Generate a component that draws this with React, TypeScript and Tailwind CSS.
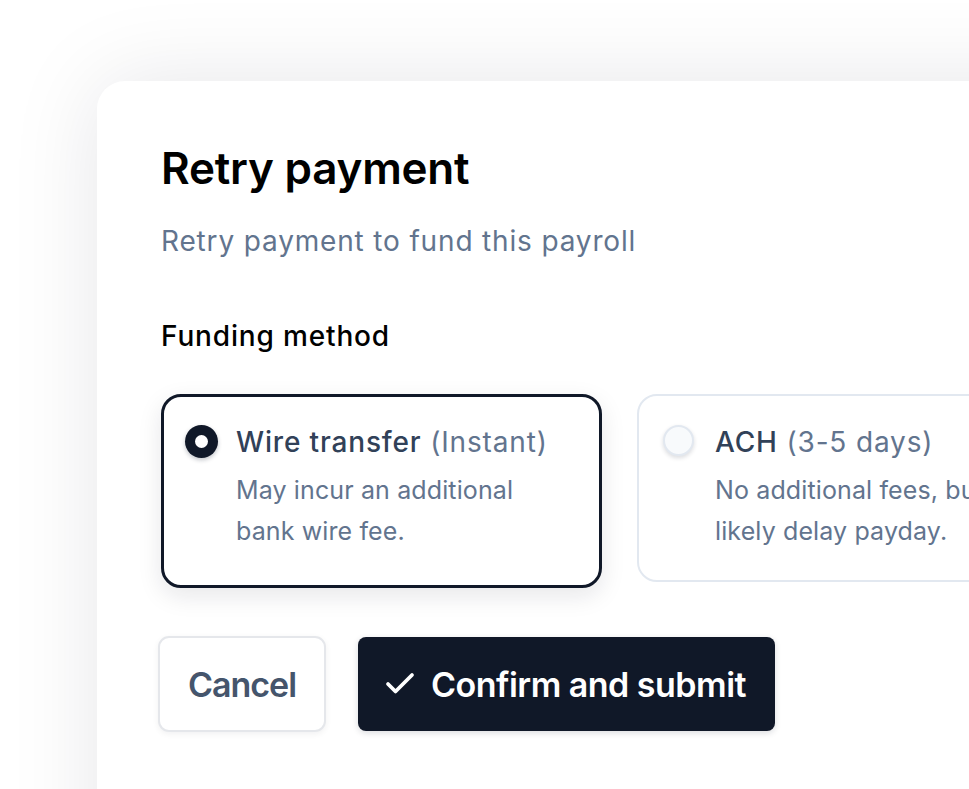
import { Check } from "lucide-react";

const options = [
    {
        id: "wire",
        title: "Wire transfer",
        hint: "(Instant)",
        desc: "May incur an additional bank wire fee.",
        selected: true,
    },
    {
        id: "ach",
        title: "ACH",
        hint: "(3-5 days)",
        desc: "No additional fees, but will likely delay payday.",
        selected: false,
    },
];

const App = () => {
    return (
        <main className="w-full h-screen overflow-hidden bg-white pt-[81px] pl-[97px] font-['Inter',sans-serif]">
            <div className="w-[1100px] h-[900px] bg-white rounded-tl-[28px] shadow-[0_0_90px_rgba(15,23,42,0.10)] pt-[61px] pl-[64px]">
                <h1 className="text-[44px] leading-[52px] font-semibold text-black tracking-[-0.005em]">Retry payment</h1>
                <p className="mt-[29px] text-[28px] leading-[36px] text-slate-500 tracking-[0.03em]">Retry payment to fund this payroll</p>

                <h2 className="mt-[59px] text-[28px] leading-[36px] font-medium text-black tracking-[0.03em]">Funding method</h2>

                <div className="flex items-start gap-[35px] mt-[40px]">
                    {options.map((opt) => (
                        <div
                            key={opt.id}
                            className={
                                opt.selected
                                    ? "w-[441px] h-[194px] shrink-0 rounded-[20px] border-[3px] border-gray-900 bg-white shadow-[0_8px_24px_rgba(15,23,42,0.10)] pt-[27px] pl-[21px] pr-[30px] flex gap-[18px]"
                                    : "w-[441px] h-[188px] shrink-0 rounded-[20px] border-2 border-slate-200 bg-white pt-[28px] pl-[24px] pr-[20px] flex gap-[21px]"
                            }
                        >
                            {opt.selected ? (
                                <span className="mt-[1px] w-[33px] h-[33px] shrink-0 rounded-full bg-gray-900 flex items-center justify-center shadow-[0_2px_4px_rgba(15,23,42,0.25)]">
                                    <span className="w-[13px] h-[13px] rounded-full bg-white" />
                                </span>
                            ) : (
                                <span className="mt-[1px] w-[31px] h-[31px] shrink-0 rounded-full bg-slate-50 border-2 border-slate-200 shadow-[0_2px_4px_rgba(15,23,42,0.15)]" />
                            )}
                            <div>
                                <p className="text-[28px] leading-[36px] text-slate-700 tracking-[0.03em] whitespace-nowrap">
                                    <span className="font-medium">{opt.title}</span> <span className="text-slate-500">{opt.hint}</span>
                                </p>
                                <p className="mt-[10px] text-[25px] leading-[41px] text-slate-500 tracking-[0.005em]">{opt.desc}</p>
                            </div>
                        </div>
                    ))}
                </div>

                <div className="flex gap-[32px] mt-[48px] -ml-[3px]">
                    <button className="w-[168px] h-[96px] rounded-[11px] border-2 border-gray-200 bg-white shadow-[0_2px_6px_rgba(15,23,42,0.06)] text-[34px] font-semibold text-slate-600 tracking-[-0.03em]">
                        Cancel
                    </button>
                    <button className="w-[417px] h-[94px] mt-[1px] rounded-[8px] bg-gray-900 text-white text-[34px] font-semibold tracking-[-0.015em] flex items-center pl-[24px] gap-[13px] shadow-[0_2px_6px_rgba(15,23,42,0.15)]">
                        <Check className="w-[36px] h-[36px]" strokeWidth={2.5} />
                        Confirm and submit
                    </button>
                </div>
            </div>
        </main>
    );
};

export default App;
